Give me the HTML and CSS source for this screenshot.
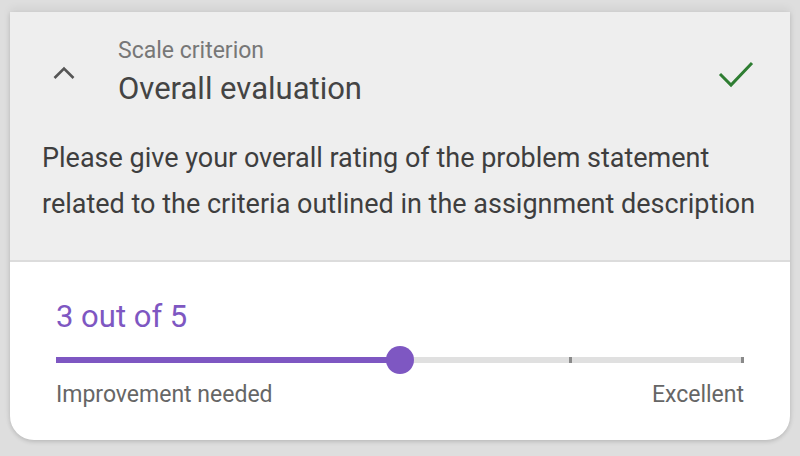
FILE: index.html
```html
<!DOCTYPE html>
<html>
<head>
<meta charset="utf-8">
<link rel="stylesheet" href="styles.css">
</head>
<body>
<div class="card">
  <div class="head">
    <div class="title-row">
      <svg class="chev" width="24" height="16" viewBox="0 0 24 16"><path d="M2.5 13L12 3.5 21.5 13" fill="none" stroke="#555" stroke-width="2.6"/></svg>
      <div class="titles">
        <div class="kicker">Scale criterion</div>
        <div class="title">Overall evaluation</div>
      </div>
      <svg class="check" width="36" height="28" viewBox="0 0 36 28"><path d="M2 13L13 24 34 2" fill="none" stroke="#2e7d32" stroke-width="3"/></svg>
    </div>
    <p class="desc">Please give your overall rating of the problem statement related to the criteria outlined in the assignment description</p>
  </div>
  <div class="body">
    <div class="value">3 out of 5</div>
    <div class="slider">
      <div class="track"></div>
      <div class="active" style="width:50%"></div>
      <span class="tick" style="left:75%"></span>
      <span class="tick" style="left:100%"></span>
      <span class="thumb" style="left:50%"></span>
    </div>
    <div class="labels"><span>Improvement needed</span><span>Excellent</span></div>
  </div>
</div>
</body>
</html>
```
FILE: styles.css
```css
html, body { margin: 0; padding: 0; }
body {
  background: #dedede;
  font-family: Roboto, "Noto Sans", sans-serif;
  width: 800px;
  height: 456px;
  overflow: hidden;
  padding: 12px 10px 0 10px;
  box-sizing: border-box;
}
.card {
  background: #fff;
  border-radius: 0 0 24px 24px;
  box-shadow: 0 2px 4px rgba(0,0,0,0.15), 0 -4px 8px rgba(0,0,0,0.06);
  overflow: hidden;
  height: 428px;
}
.head {
  background: #eeeeee;
  border-bottom: 2px solid #dcdcdc;
  padding: 24px 0 0 0;
  height: 224px;
}
.title-row {
  display: flex;
  align-items: center;
  padding: 0 36px 0 42px;
}
.chev { flex: none; }
.titles { flex: 1; margin-left: 42px; }
.kicker { font-size: 23px; color: #777; line-height: 26px; margin-top: 2px; }
.title { font-size: 31px; color: #444; line-height: 40px; margin-top: 5px; }
.check { flex: none; margin-top: 4px; }
.desc {
  margin: 26px 0 0 32px;
  font-size: 27px;
  line-height: 46px;
  color: #3e3e3e;
  width: 740px;
}
.body { padding: 37px 46px 0 46px; }
.value { font-size: 31px; color: #7e57c2; line-height: 36px; }
.slider { position: relative; height: 30px; margin-top: 10px; }
.track { position: absolute; left: 0; right: 0; top: 12px; height: 6px; background: #e0e0e0; }
.active { position: absolute; left: 0; top: 12px; height: 6px; background: #7e57c2; }
.tick { position: absolute; top: 12px; width: 3px; height: 6px; background: #8a8a8a; margin-left: -3px; }
.thumb { position: absolute; top: 1px; width: 28px; height: 28px; margin-left: -14px; border-radius: 50%; background: #7e57c2; }
.labels { display: flex; justify-content: space-between; font-size: 23px; line-height: 28px; color: #666; margin-top: 6px; }
```
